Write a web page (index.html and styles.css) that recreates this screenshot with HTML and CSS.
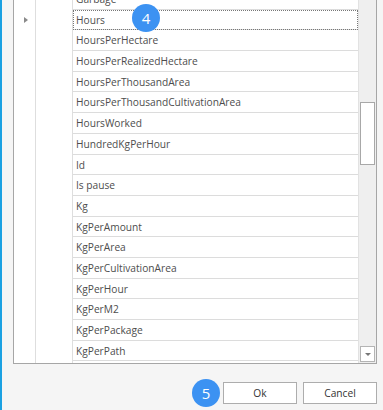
FILE: index.html
```html
<!DOCTYPE html>
<html lang="en">
<head>
    <title>Select Field</title>
    <link rel="stylesheet" href="styles.css">
</head>
<body>
    <div class="window">
        <div class="grid">
            <div class="indicator">
                <div class="ind-cell"></div>
                <div class="ind-cell"><span class="arrow"></span></div>
            </div>
            <div class="spacer-col"></div>
            <div class="rows">
                <div class="row">Garbage</div>
                <div class="row focused">Hours</div>
                <div class="row">HoursPerHectare</div>
                <div class="row">HoursPerRealizedHectare</div>
                <div class="row">HoursPerThousandArea</div>
                <div class="row">HoursPerThousandCultivationArea</div>
                <div class="row">HoursWorked</div>
                <div class="row">HundredKgPerHour</div>
                <div class="row">Id</div>
                <div class="row">Is pause</div>
                <div class="row">Kg</div>
                <div class="row">KgPerAmount</div>
                <div class="row">KgPerArea</div>
                <div class="row">KgPerCultivationArea</div>
                <div class="row">KgPerHour</div>
                <div class="row">KgPerM2</div>
                <div class="row">KgPerPackage</div>
                <div class="row">KgPerPath</div>
            </div>
            <div class="scrollbar">
                <div class="thumb"></div>
                <div class="scroll-down"><span class="down-arrow"></span></div>
            </div>
        </div>

        <div class="footer">
            <span class="badge">5</span>
            <button class="btn">Ok</button>
            <button class="btn">Cancel</button>
        </div>

        <span class="badge badge-top">4</span>
    </div>
</body>
</html>
```

FILE: styles.css
```css
body {
    margin: 0;
    padding: 0;
    font-family: "Open Sans", "Noto Sans", sans-serif;
    background-color: #f5f5f5;
    overflow: hidden;
}

.window {
    position: relative;
    display: flow-root;
    height: 410px;
    border-left: 2px solid #1ba1e2;
    padding: 0 6px 0 11px;
    box-sizing: border-box;
}

.grid {
    display: flex;
    margin-top: -11px;
    height: 375px;
    background-color: #fff;
    border: 1px solid #a6a6a6;
    border-top: none;
    box-sizing: border-box;
}

.indicator {
    width: 21px;
    border-right: 1px solid #dedede;
}

.ind-cell {
    height: 20.7px;
    display: flex;
    align-items: center;
    justify-content: center;
}

.arrow {
    width: 0;
    height: 0;
    border-top: 3.5px solid transparent;
    border-bottom: 3.5px solid transparent;
    border-left: 4px solid #8a8a8a;
    margin-left: 2px;
}

.spacer-col {
    width: 36px;
    border-right: 1px solid #dedede;
}

.rows {
    flex: 1;
    overflow: hidden;
}

.row {
    height: 20.7px;
    line-height: 20px;
    box-sizing: border-box;
    padding-left: 3px;
    border-bottom: 1px solid #dcdcdc;
    font-size: 10.2px;
    color: #4d4d4d;
    white-space: nowrap;
}

.row.focused {
    outline: 1px dotted #777;
    outline-offset: -1px;
}

.scrollbar {
    width: 18px;
    background-color: #efefef;
    border-left: 1px solid #e2e2e2;
    display: flex;
    flex-direction: column;
    align-items: flex-end;
    padding-right: 1px;
    box-sizing: border-box;
}

.thumb {
    margin-top: 113px;
    width: 15px;
    height: 63px;
    background-color: #fff;
    border: 1px solid #a8a8a8;
    box-sizing: border-box;
}

.scroll-down {
    margin-top: auto;
    margin-bottom: 1px;
    width: 15px;
    height: 16px;
    background-color: #fff;
    border: 1px solid #b4b4b4;
    box-sizing: border-box;
    display: flex;
    align-items: center;
    justify-content: center;
}

.down-arrow {
    width: 0;
    height: 0;
    border-left: 3px solid transparent;
    border-right: 3px solid transparent;
    border-top: 3px solid #777;
    margin-top: 1px;
}

.footer {
    display: flex;
    justify-content: flex-end;
    align-items: center;
    margin-top: 15px;
}

.btn {
    width: 74px;
    height: 22px;
    margin-left: 6px;
    background-color: #fff;
    border: 1px solid #adadad;
    font-family: "Open Sans", "Noto Sans", sans-serif;
    font-size: 10.2px;
    color: #333;
    padding: 0;
}

.badge {
    display: inline-flex;
    align-items: center;
    justify-content: center;
    width: 28px;
    height: 28px;
    border-radius: 50%;
    background-color: #3c92f2;
    color: #fff;
    font-size: 15px;
    font-family: "Open Sans", "Noto Sans", sans-serif;
    margin-right: -3px;
}

.badge-top {
    position: absolute;
    left: 130px;
    top: 4px;
    margin: 0;
}
```
